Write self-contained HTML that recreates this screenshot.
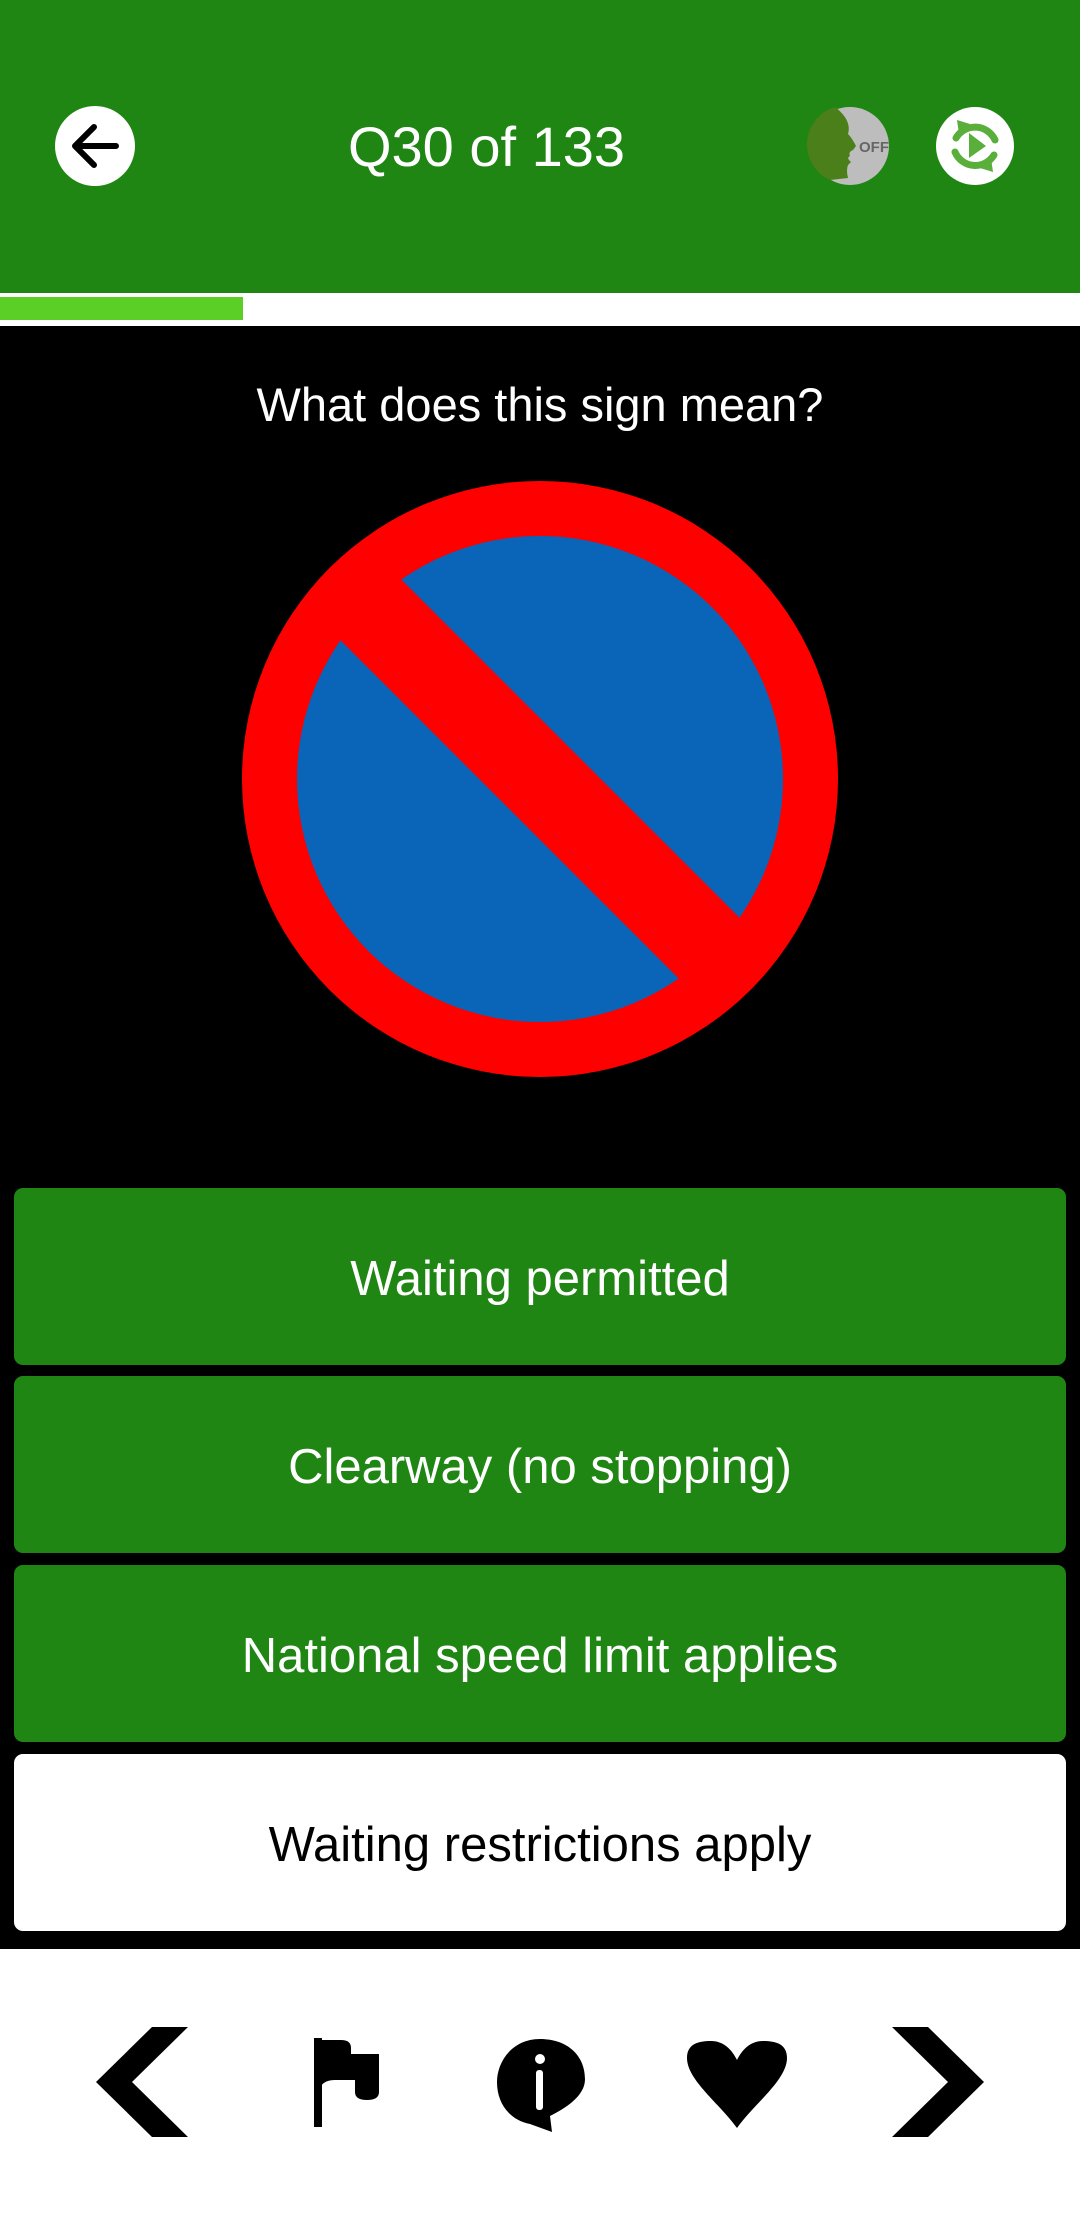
<!DOCTYPE html>
<html><head><style>
html,body{margin:0;padding:0;width:1080px;height:2220px;overflow:hidden;background:#fff;font-family:"Liberation Sans",sans-serif}
.hdr{position:absolute;left:0;top:0;width:1080px;height:293px;background:#1f8614}
.prog{position:absolute;left:0;top:297px;width:243px;height:23px;background:#5ccf26}
.blk{position:absolute;left:0;top:326px;width:1080px;height:1623px;background:#000}
.title{position:absolute;left:0;width:973px;top:114px;text-align:center;color:#fff;font-size:56px}
.q{position:absolute;left:0;width:1080px;top:377px;text-align:center;color:#fff;font-size:47px}
.btn{position:absolute;left:14px;width:1052px;height:177px;border-radius:9px;background:#1f8614;color:#fff;font-size:49px;display:flex;align-items:center;justify-content:center;padding-top:4px;box-sizing:border-box}
.w{background:#fff;color:#000}
</style></head><body>
<div class="hdr"></div>
<div class="prog"></div>
<div class="blk"></div>
<svg style="position:absolute;left:0;top:0" width="1080" height="300">
<circle cx="95" cy="146" r="40" fill="#fff"/>
<path d="M116 146H76M94 127L75 146L94 165" stroke="#000" stroke-width="6" fill="none" stroke-linecap="round" stroke-linejoin="round"/>
<circle cx="850" cy="146" r="39" fill="#bdbdbd"/>
<path d="M835 107 A39 39 0 0 0 830 180 L848 178 Q846 170 848 165 L851 162 Q846 158 850 156 Q848 152 853 150 L856 146 Q852 138 848 134 Q852 120 835 107Z" fill="#4a7f1a"/>
<text x="874" y="152" font-size="15" font-weight="bold" fill="#666" text-anchor="middle" font-family="Liberation Sans">OFF</text>
<circle cx="975" cy="146" r="39" fill="#fff"/>
<path d="M956 138 A22 22 0 0 1 995 140 M994 155 A22 22 0 0 1 955 152" stroke="#5aae3a" stroke-width="7" fill="none" stroke-linecap="round"/>
<path d="M957 120 L970 124 L959 134Z M993 172 L980 168 L991 158Z" fill="#5aae3a"/>
<path d="M969 133 L986 146 L969 158Z" fill="#5aae3a"/>
</svg>
<div class="title">Q30 of 133</div>
<div class="q">What does this sign mean?</div>
<svg style="position:absolute;left:0;top:0" width="1080" height="1100">
<defs><clipPath id="c"><circle cx="540" cy="779" r="244"/></clipPath></defs>
<circle cx="540" cy="779" r="298" fill="#ff0000"/>
<circle cx="540" cy="779" r="243" fill="#0a64b8"/>
<line x1="340" y1="579" x2="740" y2="979" stroke="#ff0000" stroke-width="86" clip-path="url(#c)"/>
</svg>
<div class="btn" style="top:1188px">Waiting permitted</div>
<div class="btn" style="top:1376px">Clearway (no stopping)</div>
<div class="btn" style="top:1565px">National speed limit applies</div>
<div class="btn w" style="top:1754px">Waiting restrictions apply</div>
<svg style="position:absolute;left:0;top:2000px" width="1080" height="180">
<path d="M188 27 L152 27 L96 82 L152 137 L188 137 L132 82Z" fill="#000"/>
<path d="M892 27 L928 27 L984 82 L928 137 L892 137 L948 82Z" fill="#000"/>
<rect x="314" y="38" width="8" height="89" fill="#000"/>
<path d="M321 40 h20 q10 0 10 8 v6 h-30Z" fill="#000"/>
<path d="M321 48 h30 v6 h28 v38 q0 8 -12 8 q-12 0 -12 -8 v-12 h-20 q-10 0 -14 6Z" fill="#000"/>
<path d="M540 39 C512 39 497 62 497 82 C497 104 510 120 530 124 L552 132 L550 116 C574 104 585 92 585 79 C585 56 568 39 540 39Z" fill="#000"/>
<rect x="536" y="70" width="7" height="40" rx="3" fill="#fff"/>
<circle cx="540" cy="59" r="5" fill="#fff"/>
<path d="M737 128 C720 104 687 80 687 58 C687 44 698 41 711 41 C724 41 732 50 737 60 C742 50 750 41 763 41 C776 41 787 44 787 58 C787 80 754 104 737 128Z" fill="#000"/>
</svg>
</body></html>
